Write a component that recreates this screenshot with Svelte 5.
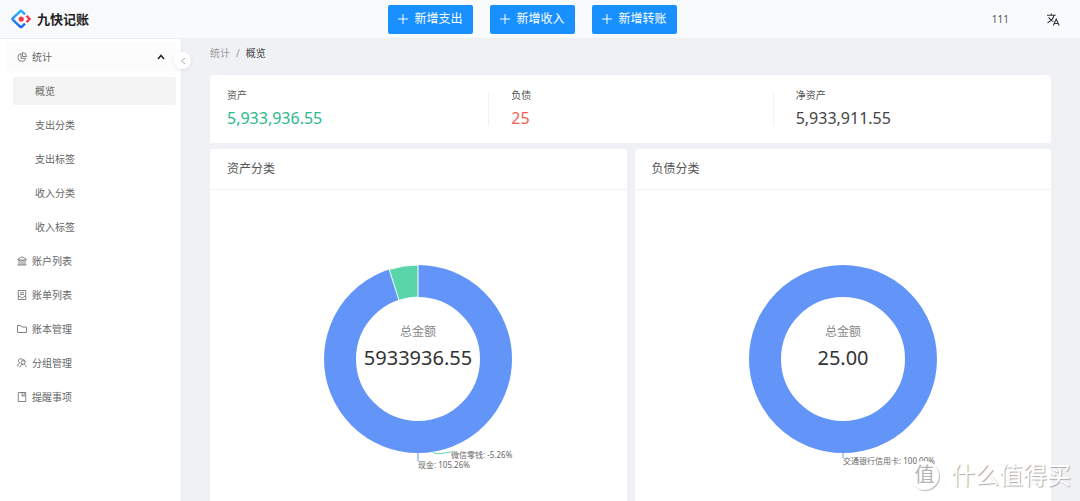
<script lang="ts">
	// Buttons in the header
	const actions: string[] = ['新增支出', '新增收入', '新增转账'];

	// Children of the statistics group
	const reports: string[] = ['概览', '支出分类', '支出标签', '收入分类', '收入标签'];
	let current = $state('概览');
	let open = $state(true);

	const links: Array<{ icon: string; name: string }> = [
		{ icon: 'bank', name: '账户列表' },
		{ icon: 'bill', name: '账单列表' },
		{ icon: 'folder', name: '账本管理' },
		{ icon: 'team', name: '分组管理' },
		{ icon: 'book', name: '提醒事项' }
	];

	const totals: Array<{ name: string; value: string; tone: string }> = [
		{ name: '资产', value: '5,933,936.55', tone: 'green' },
		{ name: '负债', value: '25', tone: 'red' },
		{ name: '净资产', value: '5,933,911.55', tone: 'plain' }
	];
</script>

{#snippet icon(name: string)}
	<svg class="icon" viewBox="0 0 20 20" aria-hidden="true">
		{#if name === 'pie'}
			<path d="M8 3a8 8 0 1 0 9.500 9.500H8z" />
			<path d="M11 1v8h8a8 8 0 0 0-8-8z" />
		{:else if name === 'bank'}
			<path d="M1.5 8V6.500L10 1.500l8.500 5V8zM4 8v9.500M8 8v9.500M12 8v9.500M16 8v9.500M1 18h18" />
		{:else if name === 'bill'}
			<path d="M2.500 1h15v18h-15zM6 5.500h8M6 9h8M2.500 12.500H6c1 4 7 4 8 0h3.500" />
		{:else if name === 'folder'}
			<path d="M1 3h6.500L10 6h9v11H1z" />
		{:else if name === 'team'}
			<path d="M5.500 9.500A4.200 4.200 0 1 1 11 4.500M5.500 9.500C3 10.500 1.500 13.500 1.500 17" />
			<circle cx="12" cy="9" r="3.800" />
			<path d="M6 18.500c.5-3.500 2.500-5.700 6-5.700M14 12.300c2.500 1 4 3.200 4.500 6.200M11 3.500c3-1 5.500 1 5.500 4" />
		{:else if name === 'book'}
			<path d="M2.500 1h15v18h-15zM10 1v7.500l2.200-1.500 2.200 1.500V1" />
		{/if}
	</svg>
{/snippet}

<div class="page">
	<header>
		<a class="brand" href="#home">
			<svg viewBox="0 0 20 20" aria-hidden="true">
				<defs>
					<linearGradient id="brand-blue" x1="0" y1="0" x2="0" y2="1">
						<stop offset="0" stop-color="#29b6ff" />
						<stop offset="1" stop-color="#1464f0" />
					</linearGradient>
				</defs>
				<path
					d="M14 5.400 10.900 2.300a1.300 1.300 0 0 0-1.800 0L1.900 9.100a1.300 1.300 0 0 0 0 1.800l7.200 6.800a1.300 1.300 0 0 0 1.800 0l3.100-3.100"
					fill="none"
					stroke="url(#brand-blue)"
					stroke-width="2.400"
				/>
				<path d="M15.500 6.800 18.500 10l-3 3.200" fill="none" stroke="#f5384b" stroke-width="2.400" />
				<circle cx="10.200" cy="10" r="2.600" fill="#f5384b" />
			</svg>
			<span>九快记账</span>
		</a>
		<div class="actions">
			{#each actions as action}
				<button>
					<svg viewBox="0 0 10 10" aria-hidden="true"><path d="M5 0v10M0 5h10" /></svg>
					{action}
				</button>
			{/each}
		</div>
		<div class="account">
			<a href="#user">111</a>
			<button aria-label="语言">
				<svg viewBox="0 0 12 12" aria-hidden="true">
					<path d="M0 2h8M4 .5V2M1.500 4C2.500 6 4.500 7.500 6 8M6.500 2C6 5 3.500 7.500.5 9" />
					<path d="M5.800 11.500 8.500 5.500l2.700 6M6.800 9.700h3.500" />
				</svg>
			</button>
		</div>
	</header>

	<div class="body">
		<nav>
			<button class="group" aria-expanded={open} onclick={() => (open = !open)}>
				{@render icon('pie')}
				<span>统计</span>
				<svg class="arrow" class:closed={!open} viewBox="0 0 8 6" aria-hidden="true">
					<path d="M1 5l3-3.500L7 5" />
				</svg>
			</button>
			{#if open}
				{#each reports as report}
					<a
						class="report"
						class:active={current === report}
						href="#report"
						onclick={() => (current = report)}>{report}</a
					>
				{/each}
			{/if}
			{#each links as link}
				<a class="link" href="#{link.icon}">
					{@render icon(link.icon)}
					<span>{link.name}</span>
				</a>
			{/each}
			<button class="collapse" aria-label="收起">
				<svg viewBox="0 0 6 8" aria-hidden="true"><path d="M5 1 1.500 4 5 7" /></svg>
			</button>
		</nav>

		<main>
			<div class="crumbs">
				<a href="#stats">统计</a>
				<span>/</span>
				<strong>概览</strong>
			</div>

			<section class="totals">
				{#each totals as total}
					<div class="total">
						<div class="name">{total.name}</div>
						<div class="value {total.tone}">{total.value}</div>
					</div>
				{/each}
			</section>

			<div class="charts">
				<section class="card">
					<h2>资产分类</h2>
					<svg class="chart" viewBox="0 0 380 312" role="img" aria-label="资产分类">
						<circle class="ring" cx="190" cy="169" r="78" />
						<path class="slice" d="M190 75A94 94 0 0 0 161.200 79.500L171 110.300A62 62 0 0 1 190 107z" />
						<path class="leader" d="M190 263v8" />
						<path class="leader green" d="M205 262c3 3 10 1 18 0" />
						<text class="caption" x="190" y="146">总金额</text>
						<text class="sum" x="190" y="175">5933936.55</text>
						<text class="label" x="223" y="268">微信零钱: -5.26%</text>
						<text class="label" x="190" y="278">现金: 105.26%</text>
					</svg>
				</section>
				<section class="card">
					<h2>负债分类</h2>
					<svg class="chart" viewBox="0 0 380 312" role="img" aria-label="负债分类">
						<circle class="ring" cx="190" cy="169" r="78" />
						<path class="leader" d="M190 263v5" />
						<text class="caption" x="190" y="146">总金额</text>
						<text class="sum" x="190" y="175">25.00</text>
						<text class="label" x="190" y="274">交通银行信用卡: 100.00%</text>
					</svg>
				</section>
			</div>
		</main>
	</div>

	<div class="watermark">
		<span class="seal">值</span>
		<span>什么值得买</span>
	</div>
</div>

<style>
	:global(body) {
		background: #eff1f5;
	}

	.page {
		position: relative;
		display: flex;
		flex-direction: column;
		height: 100vh;
		overflow: hidden;
		font-family: 'Noto Sans', 'Noto Sans CJK SC', sans-serif;
		font-size: 10px;
		line-height: 16px;
		color: #555;
	}

	a {
		color: inherit;
		text-decoration: none;
	}

	button {
		padding: 0;
		border: 0;
		background: none;
		font: inherit;
		color: inherit;
		cursor: pointer;
	}

	svg {
		flex: none;
	}

	header {
		display: grid;
		grid-template-columns: 1fr auto 1fr;
		align-items: center;
		height: 38px;
		flex: none;
		padding: 0 20px 0 11px;
		background: #f9fafc;
		border-bottom: 1px solid #eeeff1;
	}

	.brand {
		display: flex;
		align-items: center;
		gap: 6px;
		font-size: 13px;
		font-weight: 700;
		color: #222;
	}

	.brand svg {
		width: 20px;
		height: 20px;
	}

	.actions {
		display: flex;
		gap: 17px;
		padding-right: 6px;
	}

	.actions button {
		display: flex;
		align-items: center;
		justify-content: center;
		gap: 6px;
		width: 85px;
		height: 29px;
		border-radius: 2px;
		background: #1890ff;
		color: #fff;
		font-size: 12px;
	}

	.actions svg {
		width: 10px;
		height: 10px;
		stroke: #fff;
	}

	.account {
		display: flex;
		align-items: center;
		justify-content: flex-end;
		gap: 38px;
	}

	.account svg {
		display: block;
		width: 13px;
		height: 13px;
		fill: none;
		stroke: #333;
	}

	.body {
		display: flex;
		flex: 1;
		min-height: 0;
	}

	nav {
		position: relative;
		display: flex;
		flex-direction: column;
		gap: 6px;
		width: 182px;
		flex: none;
		box-sizing: border-box;
		padding: 3px 5px 3px 6px;
		background: #fff;
		border-right: 1px solid #e8eaee;
		color: #666;
	}

	.group,
	.link,
	.report {
		display: flex;
		align-items: center;
		gap: 5px;
		height: 28px;
		flex: none;
		padding: 0 11px;
	}

	.group {
		height: 29px;
		background: #fcfcfc;
	}

	.report {
		margin-left: 7px;
		padding-left: 22px;
		border-radius: 2px;
	}

	.report.active {
		background: #f4f4f4;
	}

	.icon {
		width: 10px;
		height: 10px;
		fill: none;
		stroke: #666;
		stroke-width: 1.6px;
	}

	.arrow {
		width: 8px;
		height: 6px;
		margin-left: auto;
		fill: none;
		stroke: #222;
		stroke-width: 1.5px;
	}

	.arrow.closed {
		transform: rotate(180deg);
	}

	.collapse {
		position: absolute;
		top: 13px;
		right: -10px;
		display: flex;
		align-items: center;
		justify-content: center;
		width: 17px;
		height: 17px;
		border-radius: 50%;
		background: #fff;
		box-shadow: 0 1px 4px rgba(0, 0, 0, 0.08);
	}

	.collapse svg {
		width: 6px;
		height: 8px;
		fill: none;
		stroke: #aaa;
	}

	main {
		display: flex;
		flex-direction: column;
		gap: 6px;
		flex: 1;
		min-width: 0;
		padding: 6px 29px 0 28px;
	}

	.crumbs {
		display: flex;
		gap: 6px;
		margin-bottom: 8px;
		color: #999;
	}

	.crumbs strong {
		font-weight: 400;
		color: #444;
	}

	.totals {
		display: grid;
		grid-template-columns: repeat(3, 1fr);
		gap: 46px;
		padding: 12px 17px;
		border-radius: 3px;
		background: #fff;
	}

	.total {
		position: relative;
		height: 44px;
	}

	.total + .total::before {
		content: '';
		position: absolute;
		top: 5px;
		left: -23px;
		height: 34px;
		border-left: 1px solid #f2f2f2;
	}

	.value {
		font-size: 16px;
		line-height: 30px;
		color: #444;
	}

	.value.green {
		color: #2bb98b;
	}

	.value.red {
		color: #f0604d;
	}

	.charts {
		display: grid;
		grid-template-columns: 1fr 1fr;
		gap: 8px;
		flex: 1;
	}

	.card {
		border-radius: 3px 3px 0 0;
		background: #fff;
	}

	h2 {
		margin: 0;
		padding: 0 17px;
		border-bottom: 1px solid #f2f2f3;
		font-size: 12px;
		line-height: 40px;
		font-weight: 400;
	}

	.chart {
		display: block;
		width: 380px;
		height: 312px;
		margin: 0 auto;
	}

	.ring {
		fill: none;
		stroke: #6395f9;
		stroke-width: 32px;
	}

	.slice {
		fill: #5ad5aa;
		stroke: #fff;
	}

	.leader {
		fill: none;
		stroke: #6395f9;
	}

	.leader.green {
		stroke: #5ad5aa;
	}

	.caption,
	.sum {
		text-anchor: middle;
	}

	.caption {
		font-size: 12px;
		fill: #888;
	}

	.sum {
		font-size: 20px;
		fill: #333;
	}

	.label {
		font-size: 8px;
		fill: #666;
	}

	.watermark {
		position: absolute;
		right: 9px;
		bottom: 10px;
		display: flex;
		align-items: center;
		gap: 12px;
		font-size: 24px;
		line-height: 32px;
		color: #fff;
		text-shadow: 1px 1px 1px #aaa;
	}

	.seal {
		box-sizing: border-box;
		width: 29px;
		height: 29px;
		border-radius: 50%;
		background: #fff;
		box-shadow: 1px 1px 1px #bbb;
		color: #b4b4b4;
		font-size: 20px;
		line-height: 28px;
		text-align: center;
		text-shadow: none;
	}
</style>
